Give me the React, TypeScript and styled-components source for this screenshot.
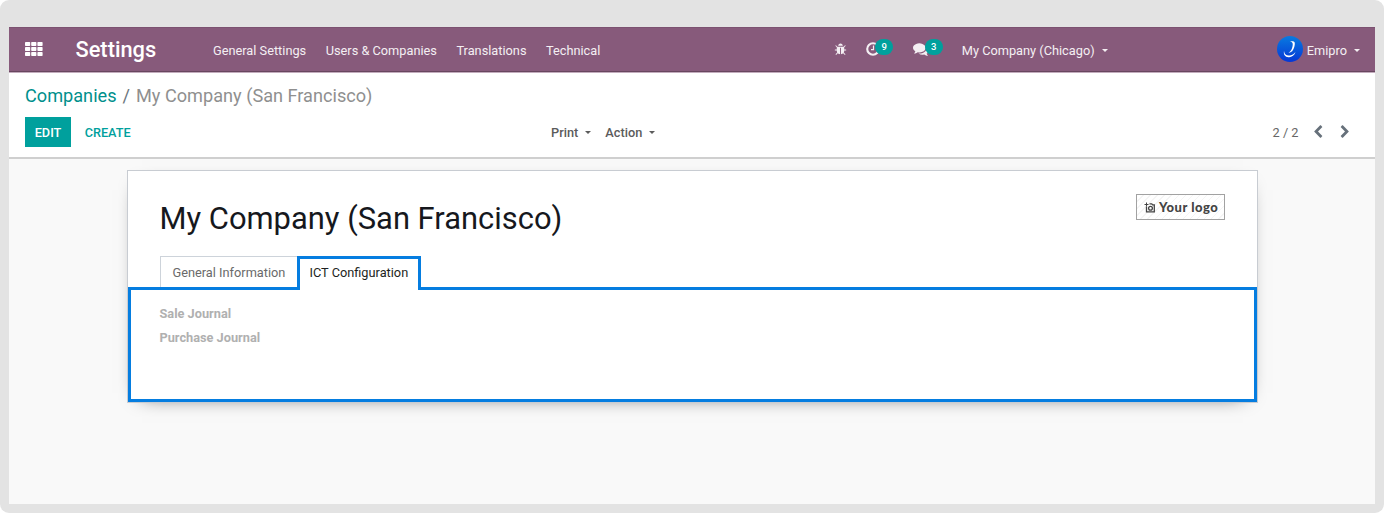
import React from "react";
import styled, { createGlobalStyle } from "styled-components";

const GlobalStyle = createGlobalStyle`
  * { box-sizing: border-box; }
  body { margin: 0; background: #fff; font-family: Roboto, "Liberation Sans", sans-serif; font-size: 12.77px; color: #4c4c4c; }
`;

const Frame = styled.div`
  width: 1384px;
  height: 513px;
  padding: 27px 9px 9px;
  background: #e3e3e3;
  border-radius: 9px;
`;

const Screen = styled.div`
  height: 477px;
  background: #f9f9f9;
  display: flex;
  flex-direction: column;
`;

const Navbar = styled.header`
  height: 45px;
  background: #875a7b;
  border-top: 1px solid #7c5271;
  border-bottom: 1px solid #68465f;
  color: #f4eff3;
  display: flex;
  align-items: center;
  padding: 0 15px 0 15.5px;
`;

const AppsIcon = styled.svg`
  width: 18px;
  height: 14px;
  margin-top: -2px;
`;

const Brand = styled.div`
  width: 137.5px;
  margin-left: 33px;
  font-size: 21.8px;
  line-height: 43px;
  font-weight: 500;
  color: #fff;
`;

const Menu = styled.nav`
  display: flex;
  gap: 19.5px;
  flex: 1;
`;

const MenuItem = styled.span`
  white-space: nowrap;
  padding-top: 1px;
`;

const Systray = styled.div`
  display: flex;
  align-items: center;
  height: 43px;
`;

const Tray = styled.div<{ $width: number }>`
  position: relative;
  width: ${(p) => p.$width}px;
  height: 16px;
  margin-top: -1px;
  display: flex;
  align-items: center;
`;

const Glyph = styled.svg<{ $size: number }>`
  width: ${(p) => p.$size}px;
  height: ${(p) => p.$size}px;
  display: block;
  flex: none;
  fill: currentColor;
`;

const Badge = styled.span<{ $left: number }>`
  position: absolute;
  left: ${(p) => p.$left}px;
  top: -2px;
  width: 18px;
  height: 16px;
  border-radius: 8px;
  background: #00a09d;
  color: #fff;
  font-size: 9.5px;
  font-weight: 500;
  line-height: 16px;
  text-align: center;
`;

const Caret = styled.i`
  display: inline-block;
  margin-left: 7px;
  border: 3.8px solid transparent;
  border-top-color: currentColor;
  border-bottom: 0;
  vertical-align: 3px;
`;

const Company = styled.div`
  width: 315px;
  padding-top: 1px;
  white-space: nowrap;
`;

const Avatar = styled.svg`
  width: 26px;
  height: 26px;
  margin: -1px 4px 0 0;
`;

const ControlPanel = styled.section`
  height: 87px;
  background: #fff;
  border-top: 1px solid #c3acbd;
  border-bottom: 2px solid #cfcfcf;
  padding: 11px 23px 0 16px;
`;

const Breadcrumb = styled.div`
  font-size: 18.15px;
  line-height: 24px;
  color: #8f8f8f;
  display: flex;
`;

const Crumb = styled.span`
  color: #008f8c;
`;

const Slash = styled.span`
  padding: 0 6px;
  color: #6c757d;
`;

const Actions = styled.div`
  display: grid;
  grid-template-columns: 526px 1fr auto;
  align-items: center;
  height: 30px;
  margin-top: 9px;
`;

const Buttons = styled.div`
  display: flex;
  gap: 4px;
`;

const Button = styled.button<{ $primary?: boolean }>`
  height: 30px;
  padding: 0 9.7px;
  border: 0;
  font: 500 12.7px/31px Roboto, sans-serif;
  color: ${(p) => (p.$primary ? "#fff" : "#00a09d")};
  background: ${(p) => (p.$primary ? "#00a09d" : "transparent")};
`;

const Dropdowns = styled.div`
  display: flex;
  gap: 14px;
  font-weight: 500;
  color: #5b5b5b;
`;

const Pager = styled.div`
  display: flex;
  align-items: center;
  color: #666;
`;

const PagerArrow = styled(Glyph)<{ $gap: number }>`
  margin: -1px 0 0 ${(p) => p.$gap}px;
  color: #66707a;
`;

const Sheet = styled.main`
  width: 1131px;
  height: 233px;
  margin: 11px 0 0 118px;
  border: 1px solid #c8ccd2;
  background: #fff;
  box-shadow: 0 5px 20px -15px #000;
  display: flex;
  flex-direction: column;
`;

const SheetHead = styled.div`
  height: 85px;
  padding: 23px 32px 0 31.5px;
  display: flex;
  justify-content: space-between;
  align-items: flex-start;
`;

const Title = styled.h1`
  margin: 5px 0 0;
  font-size: 30.92px;
  line-height: 40px;
  font-weight: 400;
  color: #16181d;
`;

const LogoBox = styled.div`
  width: 89px;
  height: 26px;
  border: 1px solid #a2a2a2;
  background: repeating-linear-gradient(135deg, #fff 0 4px, #f5f5f5 4px 5px);
  display: flex;
  align-items: center;
  gap: 4px;
  padding-left: 7px;
  color: #444;
  font: 900 13px/24px Lato, sans-serif;
  letter-spacing: 0.5px;
  white-space: nowrap;
`;

const Tabs = styled.div`
  height: 34px;
  display: flex;
  align-items: flex-start;
  padding-left: 32px;
  position: relative;
  z-index: 1;
`;

const Tab = styled.div<{ $active?: boolean }>`
  width: ${(p) => (p.$active ? 124 : 137)}px;
  height: ${(p) => (p.$active ? 34 : 31)}px;
  border: ${(p) => (p.$active ? "3px solid #057de0" : "1px solid #cdd3da")};
  border-bottom: 0;
  border-right-width: ${(p) => (p.$active ? 3 : 0)}px;
  background: #fff;
  color: ${(p) => (p.$active ? "#1d1f22" : "#6a6a6a")};
  padding-left: ${(p) => (p.$active ? 9.5 : 11.5)}px;
  line-height: ${(p) => (p.$active ? 27 : 31)}px;
  white-space: nowrap;
`;

const Panel = styled.div`
  height: 115px;
  margin-top: -3px;
  border: 3px solid #057de0;
  padding: 12px 28.5px 0;
`;

const Label = styled.div`
  line-height: 24px;
  font-size: 12.75px;
  font-weight: 700;
  color: #b0b0b0;
`;

const bug =
  "M1696 960q0 26-19 45t-45 19h-224q0 171-67 290l208 209q19 19 19 45t-19 45q-18 19-45 19t-45-19l-198-197q-5 5-15 13t-42 28.5-65 36.5-82 29-97 13v-896h-128v896q-51 0-101.5-13.5t-87-33-66-39-43.5-32.5l-15-14-183 207q-20 21-48 21-24 0-43-16-19-18-20.5-44.5t15.5-46.5l202-227q-58-114-58-274h-224q-26 0-45-19t-19-45 19-45 45-19h224v-294l-173-173q-19-19-19-45t19-45 45-19 45 19l173 173h844l173-173q19-19 45-19t45 19 19 45-19 45l-173 173v294h224q26 0 45 19t19 45zm-480-576h-640q0-133 93.5-226.5t226.5-93.5 226.5 93.5 93.5 226.5z";
const comments =
  "M1408 768q0 139-94 257t-256.5 186.5-353.5 68.5q-86 0-176-16-124 88-278 128-36 9-86 16h-3q-11 0-20.5-8t-11.5-21q-1-3-1-6.5t.5-6.5 2-6l2.5-5 3.5-5.5 4-5 4.5-5 4-4.5q5-6 23-25t26-29.5 22.5-29 25-38.5 20.5-44q-124-72-195-177t-71-224q0-139 94-257t256.5-186.5 353.5-68.5 353.5 68.5 256.5 186.5 94 257zm384 256q0 120-71 224.5t-195 176.5q10 24 20.5 44t25 38.5 22.5 29 26 29.5 23 25q1 1 4 4.5t4.5 5 4 5 3.5 5.5l2.5 5 2 6 .5 6.5-1 6.5q-3 14-13 22t-22 7q-50-7-86-16-154-40-278-128-90 16-176 16-271 0-472-132 58 4 88 4 161 0 309-45t264-129q125-92 192-212t67-254q0-77-23-152 129 71 204 178t75 230z";
const chevronLeft =
  "M1427 301l-531 531 531 531q19 19 19 45t-19 45l-166 166q-19 19-45 19t-45-19l-742-742q-19-19-19-45t19-45l742-742q19-19 45-19t45 19l166 166q19 19 19 45t-19 45z";
const chevronRight =
  "M1363 877l-742 742q-19 19-45 19t-45-19l-166-166q-19-19-19-45t19-45l531-531-531-531q-19-19-19-45t19-45l166-166q19-19 45-19t45 19l742 742q19 19 19 45t-19 45z";

const menu = ["General Settings", "Users & Companies", "Translations", "Technical"];

export default function App() {
  return (
    <Frame>
      <GlobalStyle />
      <Screen>
        <Navbar>
          <AppsIcon viewBox="0 0 18 14" fill="#fff">
            {[0, 5, 10].map((y) =>
              [0, 6.2, 12.4].map((x) => <rect key={`${x}-${y}`} x={x} y={y} width="5.2" height="4" rx=".7" />)
            )}
          </AppsIcon>
          <Brand>Settings</Brand>
          <Menu>
            {menu.map((m) => (
              <MenuItem key={m}>{m}</MenuItem>
            ))}
          </Menu>
          <Systray>
            <Tray $width={31.5}>
              <Glyph $size={13} viewBox="0 0 1792 1792"><path d={bug} /></Glyph>
            </Tray>
            <Tray $width={47}>
              <Glyph $size={14} viewBox="0 0 14 14">
                <circle cx="7" cy="7" r="5.8" fill="none" stroke="currentColor" strokeWidth="2.1" />
                <path d="M7.5 3.5v4.2H5" fill="none" stroke="currentColor" strokeWidth="1.2" />
              </Glyph>
              <Badge $left={9.5}>9</Badge>
            </Tray>
            <Tray $width={49}>
              <Glyph $size={16} viewBox="0 0 1792 1792"><path d={comments} /></Glyph>
              <Badge $left={12}>3</Badge>
            </Tray>
            <Company>My Company (Chicago)<Caret /></Company>
            <Avatar viewBox="0 0 26 26">
              <defs>
                <linearGradient id="avatar" x2="0" y2="1">
                  <stop stopColor="#087be0" />
                  <stop offset="1" stopColor="#0637d5" />
                </linearGradient>
              </defs>
              <circle cx="13" cy="13" r="13" fill="url(#avatar)" />
              <path d="M13 5.5c5-1.2 5.5 1 4.3 5.5c-1 3.5-2.8 5.5-5.8 6c2.5-2 3.6-4 4.1-7c.5-3 0-3.8-2.6-4.5z" fill="#fff" />
              <path d="M7 15c.5 4 3 5 6 4.5c2.5-.5 4.5-2 5.5-3.5c-1 3.5-4 5.500-7 5.200C8 21 6.300 18.500 7 15z" fill="#fff" />
            </Avatar>
            <MenuItem>Emipro<Caret /></MenuItem>
          </Systray>
        </Navbar>
        <ControlPanel>
          <Breadcrumb>
            <Crumb>Companies</Crumb>
            <Slash>/</Slash>
            <span>My Company (San Francisco)</span>
          </Breadcrumb>
          <Actions>
            <Buttons>
              <Button $primary>EDIT</Button>
              <Button>CREATE</Button>
            </Buttons>
            <Dropdowns>
              <span>Print<Caret /></span>
              <span>Action<Caret /></span>
            </Dropdowns>
            <Pager>
              2 / 2
              <PagerArrow $size={14} $gap={12.5} viewBox="0 0 1792 1792"><path d={chevronLeft} /></PagerArrow>
              <PagerArrow $size={14} $gap={13} viewBox="0 0 1792 1792"><path d={chevronRight} /></PagerArrow>
            </Pager>
          </Actions>
        </ControlPanel>
        <Sheet>
          <SheetHead>
            <Title>My Company (San Francisco)</Title>
            <LogoBox>
              <Glyph $size={11} viewBox="0 0 11 11">
                <path d="M2.5 4.5V9.8h7.8V2.8H8.5L7.8 1.9H5.5" fill="none" stroke="currentColor" strokeWidth="1.3" />
                <circle cx="6.5" cy="6.2" r="1.9" fill="none" stroke="currentColor" strokeWidth="1.3" />
                <path d="M2.5 .5v4M.5 2.5h4" stroke="currentColor" strokeWidth="1" />
              </Glyph>
              Your logo
            </LogoBox>
          </SheetHead>
          <Tabs>
            <Tab>General Information</Tab>
            <Tab $active>ICT Configuration</Tab>
          </Tabs>
          <Panel>
            <Label>Sale Journal</Label>
            <Label>Purchase Journal</Label>
          </Panel>
        </Sheet>
      </Screen>
    </Frame>
  );
}
